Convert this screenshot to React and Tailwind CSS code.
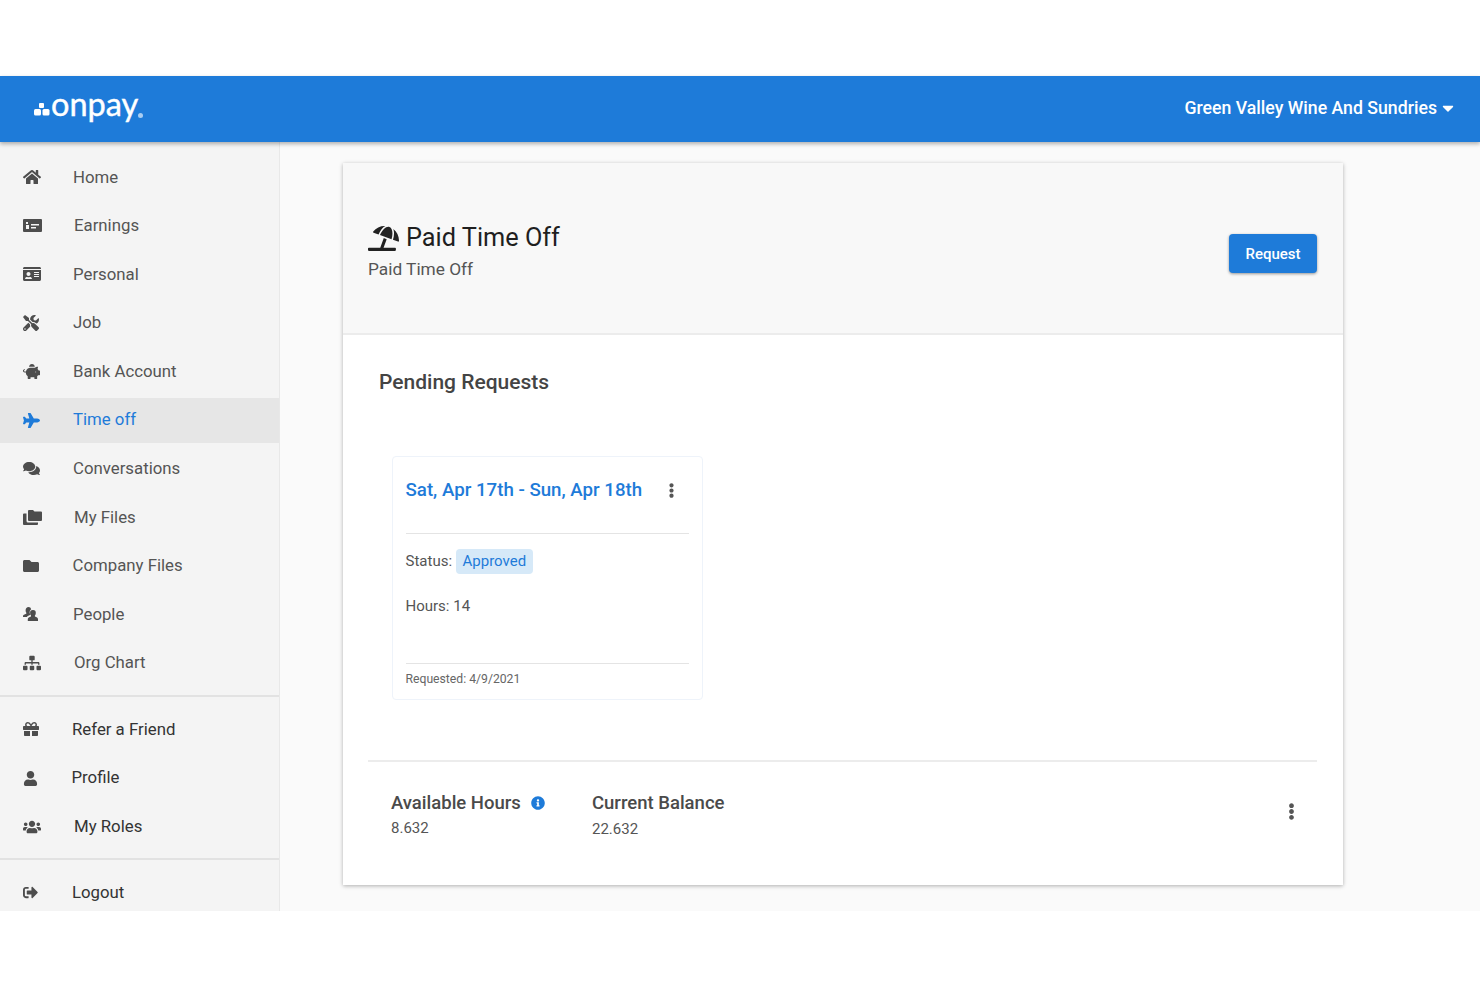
import {
  FaHome, FaIdCard, FaTools, FaPiggyBank, FaPlane, FaComments, FaFolder,
  FaSitemap, FaGift, FaUser, FaUsers, FaSignOutAlt, FaUmbrellaBeach, FaInfoCircle,
  FaEllipsisV, FaCaretDown,
} from 'react-icons/fa'

function EarningsIcon({ className }) {
  return (
    <svg viewBox="0 0 19 13" width="19" height="13" className={className}>
      <path fill="currentColor" fillRule="evenodd" d="M1 0h17a1 1 0 0 1 1 1v11a1 1 0 0 1-1 1H1a1 1 0 0 1-1-1V1a1 1 0 0 1 1-1zM3 3v2h2V3zM3 6v4h3V6zM8 5v1.500h8V5zM8 8v1.500h5V8z" />
    </svg>
  )
}

function FilesIcon({ className }) {
  return (
    <svg viewBox="0 0 19 15" width="19" height="15" className={className}>
      <path fill="currentColor" d="M5 1a1 1 0 0 1 1-1h4l1.500 1.500H18a1 1 0 0 1 1 1V10a1 1 0 0 1-1 1H6a1 1 0 0 1-1-1z" />
      <path fill="currentColor" d="M0 4.500a1 1 0 0 1 1-1h2.500V11a1.500 1.500 0 0 0 1.500 1.500h10V14a1 1 0 0 1-1 1H1a1 1 0 0 1-1-1z" />
    </svg>
  )
}

function PeopleIcon({ className }) {
  return (
    <svg viewBox="0 0 15 14" width="15" height="14" className={className}>
      <path fill="currentColor" d="M5.500 0a2.800 2.800 0 0 1 2.700 2.200A3.500 3.500 0 0 0 6.600 5.200c0 1.100.4 2 1 2.600-1.700.5-3.100 1.300-3.700 2.200H0V9c0-1 1.500-1.700 3.300-2.200v-1C2.800 5.200 2.600 4.300 2.600 3.200 2.600 1.300 3.800 0 5.500 0z" />
      <path fill="currentColor" d="M10 3a2.800 2.800 0 0 1 2.800 3c0 1.100-.3 2-.9 2.600v1c1.700.5 3.100 1.300 3.100 2.400v2H4.800v-2c0-1.100 1.500-1.900 3.200-2.400v-1c-.6-.6-.9-1.500-.9-2.600A2.800 2.800 0 0 1 10 3z" />
    </svg>
  )
}

const mainItems = [
  { label: 'Home', icon: FaHome, text: 'ml-[73px]', size: 'text-[18px]' },
  { label: 'Earnings', icon: EarningsIcon, text: 'ml-[74px]', size: '' },
  { label: 'Personal', icon: FaIdCard, text: 'ml-[73px]', size: 'text-[18px]' },
  { label: 'Job', icon: FaTools, text: 'ml-[73px]', size: 'text-[16px]' },
  { label: 'Bank Account', icon: FaPiggyBank, text: 'ml-[73px]', size: 'text-[17px]' },
  { label: 'Time off', icon: FaPlane, text: 'ml-[73px]', size: 'text-[17px]', active: true },
  { label: 'Conversations', icon: FaComments, text: 'ml-[73px]', size: 'text-[17px]' },
  { label: 'My Files', icon: FilesIcon, text: 'ml-[74px]', size: '' },
  { label: 'Company Files', icon: FaFolder, text: 'ml-[72.500px]', size: 'text-[16px]' },
  { label: 'People', icon: PeopleIcon, text: 'ml-[73px]', size: '' },
  { label: 'Org Chart', icon: FaSitemap, text: 'ml-[74px]', size: 'text-[18px]' },
]

const accountItems = [
  { label: 'Refer a Friend', icon: FaGift, text: 'ml-[72px]', size: 'text-[16px]' },
  { label: 'Profile', icon: FaUser, text: 'ml-[71.500px]', size: 'text-[15px]' },
  { label: 'My Roles', icon: FaUsers, text: 'ml-[74px]', size: 'text-[18px]' },
]

function NavItem({ item, dark }) {
  const Icon = item.icon
  return (
    <div className={`relative flex h-[45px] items-center ${item.active ? 'bg-[#e6e6e6] text-[#1e7bd9]' : dark ? 'text-[#333333]' : 'text-[#555555]'}`}>
      <Icon className={`absolute left-[23px] ${item.size} ${item.active ? 'text-[#1e7bd9]' : 'text-[#4d4d4d]'}`} />
      <span className={`${item.text} text-[16.800px]`}>{item.label}</span>
    </div>
  )
}

function Logo() {
  return (
    <div className="flex items-center">
      <svg width="16" height="13" viewBox="0 0 16 13" className="mt-[1px] fill-white">
        <rect x="5" y="0" width="5" height="5" rx="1" />
        <rect x="0" y="6" width="7" height="6.500" rx="1.500" />
        <rect x="8.500" y="6" width="7" height="6.500" rx="1.500" />
      </svg>
      <span className="ml-[1px] mt-[-9px] font-['Lato'] text-[32.500px] leading-none text-white [-webkit-text-stroke:0.4px_white]">onpay</span>
      <span className="mt-[12px] h-[5px] w-[5px] rounded-full bg-[#a9cdf2]" />
    </div>
  )
}

export default function App() {
  return (
    <div className="h-[987px] bg-white pt-[76px] font-['Roboto',sans-serif]">
      <header className="relative z-10 flex h-[66px] items-center justify-between bg-[#1e7bd9] pl-[34px] pr-[23.500px] shadow-[0_2px_4px_rgba(0,0,0,0.3)]">
        <Logo />
        <div className="mb-[2px] flex items-center text-white">
          <span className="text-[17.700px] font-medium">Green Valley Wine And Sundries</span>
          <FaCaretDown className="ml-[1.500px] text-[18px]" />
        </div>
      </header>

      <div className="flex h-[769px] bg-[#fafafa]">
        <aside className="w-[280px] shrink-0 border-r border-[#e8e8e8] bg-[#f4f4f4]">
          <nav className="flex flex-col gap-[3.600px] pt-[12.600px]">
            {mainItems.map((item) => (
              <NavItem key={item.label} item={item} />
            ))}
          </nav>
          <div className="mt-[9.400px] flex flex-col gap-[3.600px] border-t-2 border-[#e2e2e2] pt-[10px]">
            {accountItems.map((item) => (
              <NavItem key={item.label} item={item} dark />
            ))}
          </div>
          <div className="mt-[9px] border-t-2 border-[#e2e2e2] pt-[10px]">
            <NavItem item={{ label: 'Logout', icon: FaSignOutAlt, text: 'ml-[72px]', size: 'text-[15px]' }} dark />
          </div>
        </aside>

        <main className="flex-1 pl-[63px] pt-[21px]">
          <section className="flex h-[722px] w-[1000px] flex-col bg-white shadow-[0_1px_4px_rgba(0,0,0,0.3)]">
            <div className="flex h-[172px] shrink-0 items-center justify-between border-b-2 border-[#ececec] bg-[#f8f8f8] pl-[25px] pr-[26px]">
              <div className="pt-[6px]">
                <div className="flex items-center text-[#1f1f1f]">
                  <FaUmbrellaBeach className="text-[31px] text-[#222222]" />
                  <h1 className="ml-[7px] text-[25.300px] leading-[32px]">Paid Time Off</h1>
                </div>
                <p className="mt-[4px] text-[17.300px] leading-[22px] text-[#555555]">Paid Time Off</p>
              </div>
              <button className="mt-[11px] flex h-[39px] w-[88px] items-center justify-center rounded-[4px] bg-[#1e7bd9] pt-[1px] text-[15px] font-medium text-white shadow-[0_1px_3px_rgba(0,0,0,0.4)]">
                Request
              </button>
            </div>

            <div className="flex flex-1 flex-col pl-[25px] pr-[26px]">
              <h2 className="ml-[11px] mt-[33px] text-[21px] font-medium leading-[28px] text-[#444444]">Pending Requests</h2>

              <div className="ml-[23.500px] mt-[60px] flex h-[244px] w-[311px] flex-col rounded-[4px] border border-[#eef3fa] px-[13px]">
                <div className="flex h-[77px] shrink-0 items-start justify-between border-b border-[#e4e4e4] pt-[20px]">
                  <span className="text-[18.700px] font-medium leading-[26px] text-[#1e7bd9]">Sat, Apr 17th - Sun, Apr 18th</span>
                  <FaEllipsisV className="mr-[10px] mt-[6px] text-[15px] text-[#555555]" />
                </div>
                <div className="mt-[15px] flex items-center text-[15px] text-[#555555]">
                  <span>Status:</span>
                  <span className="ml-[3.500px] flex h-[25px] items-center rounded-[4px] bg-[#d6e9f8] px-[7px] text-[#1e7bd9]">Approved</span>
                </div>
                <p className="mt-[23px] text-[15px] leading-[18px] text-[#555555]">Hours: 14</p>
                <div className="mt-[48px] border-t border-[#e4e4e4] pt-[7px] text-[12.200px] leading-[16px] text-[#666666]">Requested: 4/9/2021</div>
              </div>

              <div className="mt-[60px] flex flex-1 items-start border-t-2 border-[#ececec] pl-[23px] pr-[17px] pt-[29px]">
                <div className="w-[201px]">
                  <div className="flex items-center">
                    <span className="text-[18.500px] font-medium leading-[24px] text-[#4a4a4a]">Available Hours</span>
                    <FaInfoCircle className="ml-[10px] text-[14px] text-[#1e7bd9]" />
                  </div>
                  <p className="mt-[3px] text-[15px] leading-[20px] text-[#555555]">8.632</p>
                </div>
                <div>
                  <span className="text-[18.500px] font-medium leading-[24px] text-[#4a4a4a]">Current Balance</span>
                  <p className="mt-[3px] text-[15px] leading-[20px] text-[#555555]">22.632</p>
                </div>
                <FaEllipsisV className="ml-auto mt-[12px] text-[17px] text-[#555555]" />
              </div>
            </div>
          </section>
        </main>
      </div>
    </div>
  )
}
